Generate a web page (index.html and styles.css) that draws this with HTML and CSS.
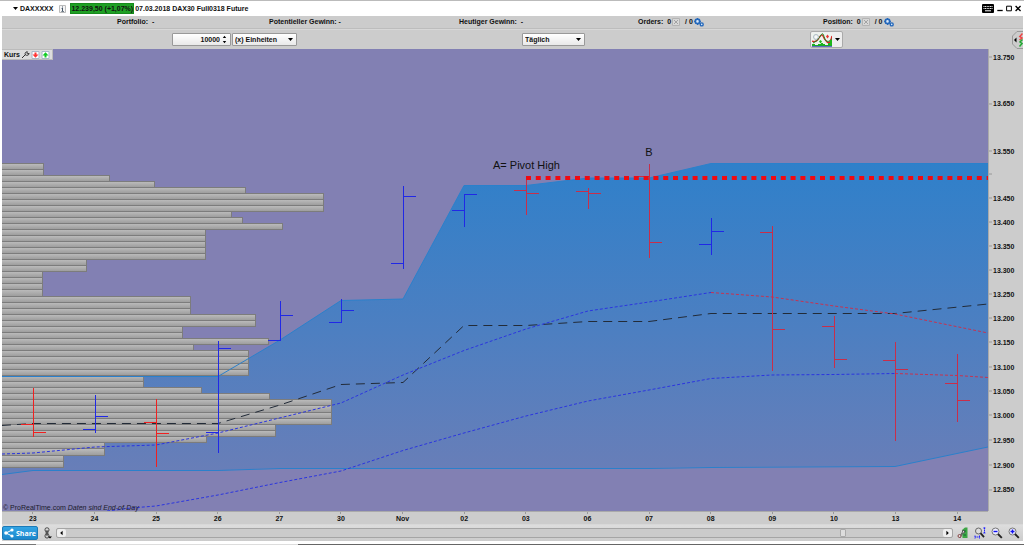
FILE: index.html
```html
<!DOCTYPE html>
<html lang="de">
<head>
<meta charset="utf-8">
<title>DAX30 Full0318 Future</title>
<link rel="stylesheet" href="styles.css">
</head>
<body>
<svg class="defs" aria-hidden="true">
  <symbol id="cancel" viewBox="0 0 9 8"><path d="M.5.5h7v7h-7z" fill="#d8d8d8" stroke="#b4b4b4"/><path d="M2 2l4 4M6 2L2 6" stroke="#a4a4a4"/></symbol>
  <symbol id="gears" viewBox="0 0 10 9"><circle cx="3.500" cy="3.400" r="2.200" fill="#d9e8f8" stroke="#2468bb" stroke-width="1.800"/><path d="M3.500 0v1M3.500 6v1M0 3.400h1M6 3.400h1M1 1l.8.8M6 1l-.8.8M1 6l.8-.8" stroke="#2468bb"/><circle cx="7.700" cy="6.400" r="1.500" fill="#d9e8f8" stroke="#2468bb" stroke-width="1.400"/></symbol>
  <symbol id="down" viewBox="0 0 5 3"><path d="M0 0h5L2.500 3z"/></symbol>
</svg>
<div class="app">
  <header class="title">
    <button class="symbol"><svg class="caret"><use href="#down"/></svg>DAXXXXX</button>
    <button class="info" aria-label="Info"><svg viewBox="0 0 7 8"><path d="M.5.5h6v7h-6z" fill="#f5f5f5" stroke="#bbb"/><path d="M3 1.500h1v1H3zM2.500 3H4v3h1v.7H2.300V6H3V3.700h-.5z" fill="#456"/></svg></button>
    <span class="quote">12.239,50 (+1,07%)</span>
    <h1 class="name">07.03.2018 DAX30 Full0318 Future</h1>
    <div class="window">
      <button aria-label="Tastatur"><svg class="keyboard" viewBox="0 0 12 9"><rect width="12" height="9" rx="1"/><path d="M1.500 2.500h9M1.500 4.500h9" stroke="#fff" stroke-dasharray="1 .6"/><path d="M3 6.800h6" stroke="#fff"/></svg></button>
      <button aria-label="Minimieren"><svg class="win" viewBox="0 0 6 7"><path d="M.3 5.500h5.400" stroke="#000" stroke-width="1.300"/></svg></button>
      <button aria-label="Maximieren"><svg class="win" viewBox="0 0 6 7"><path d="M.6 1.200h4.800v4.600H.6z" fill="none" stroke="#000"/></svg></button>
      <button aria-label="Schließen"><svg class="win" viewBox="0 0 6 7"><path d="M.6 1l5 5M5.600 1l-5 5" stroke="#000" stroke-width="1.400"/></svg></button>
    </div>
  </header>
  <div class="status">
    <span>Portfolio: &nbsp;-</span>
    <span>Potentieller Gewinn: -</span>
    <span>Heutiger Gewinn: &nbsp;-</span>
    <span class="count">Orders: &nbsp;0 <svg class="cancel"><use href="#cancel"/></svg> / 0<svg class="gears"><use href="#gears"/></svg></span>
    <span class="count">Position: &nbsp;0 <svg class="cancel"><use href="#cancel"/></svg> / 0<svg class="gears"><use href="#gears"/></svg></span>
  </div>
  <div class="toolbar">
    <div class="fields">
      <label class="field quantity"><input type="text" inputmode="numeric" value="10000" aria-label="Menge"><svg viewBox="0 0 5 9"><path d="M.8 3h3.400L2.500.8zM.8 6h3.400L2.500 8.200z"/></svg></label>
      <label class="field unit"><select aria-label="Einheit"><option>(x) Einheiten</option></select><svg class="arrow"><use href="#down"/></svg></label>
    </div>
    <div><label class="field period"><select aria-label="Zeitraum"><option>Täglich</option></select><svg class="arrow"><use href="#down"/></svg></label></div>
    <div><button class="indicator" aria-label="Indikatoren">
      <svg class="picture" viewBox="0 0 20 14"><path d="M0 0h20v14H0z" fill="#eef3ee"/><path d="M0 8Q4 10 7 5t4-2 4 6 5-6" fill="none" stroke="#d22" stroke-width="1.300"/><path d="M1 10Q5 9 8 3.500t4 0 4 5 4-3" fill="none" stroke="#282"/><path d="M0 13v-2h3v1h3v-1h3v-1h2v1h2v1h3v-2h2V7h2v6z" fill="#1bb51b"/><path d="M0 13.400h20" stroke="#2038b0" stroke-width=".8"/><path d="M4 1v6M1 4h6" stroke="#8fa0ad" stroke-width="2.600"/><path d="M4 1.500v5M1.500 4h5" stroke="#fff" stroke-width="1.500"/><path d="M15.500 1.500l1.500 2-1.500 2-1.500-2z" fill="#e33"/><path d="M8.500 7l1.500 1.500-1.500 2L7 8.500z" fill="#2b2"/></svg>
      <svg class="arrow"><use href="#down"/></svg></button></div>
    <button class="tab" aria-label="Seitenleiste"><svg viewBox="0 0 11 18"><path d="M11 .5H5L.5 5v8L5 17.500h6" fill="#ccc" stroke="#999"/><path d="M4.500 6.500v5L2 9z"/><path d="M10.500 2.500L7.800 5.500 10 7 7.500 9" fill="none" stroke="#e44" stroke-width="1.500"/><path d="M10.500 8.500L8 11l2 1.500-2.500 3" fill="none" stroke="#2a3" stroke-width="1.500"/></svg></button>
  </div>
  <main class="chart">
    <div class="plot">
      <svg class="canvas" role="img" aria-label="Kursverlauf DAX30">
        <defs>
          <linearGradient id="cloud" gradientUnits="userSpaceOnUse" x1="0" y1="163" x2="0" y2="470"><stop offset="0" stop-color="#2f80ca"/><stop offset=".55" stop-color="#4d7fc1"/><stop offset="1" stop-color="#687eb8"/></linearGradient>
          <linearGradient id="bar" x1="0" y1="0" x2="0" y2="1"><stop offset="0" stop-color="#bdbdbd"/><stop offset="1" stop-color="#9b9b9b"/></linearGradient>
        </defs>
        <svg viewBox="2 49 986 462" preserveAspectRatio="none" width="100%" height="100%">
          <path fill="url(#cloud)" d="M2 376.500H218L280 340 341 300.500 403 299 464 185.500H526L588 178H649L711 163.500H988V447L895 466.500 711 467 649 468H280L218 470.500H33L2 474.500z"/>
          <g id="volume"></g>
          <path class="band" d="M2 376.500H218L280 340 341 300.500 403 299 464 185.500H526L588 178H649L711 163.500H988"/>
          <path class="band" d="M2 474.500L33 470.500H218L280 468.500H649L711 467.500 895 466.500 988 447"/>
          <path class="middle" d="M2 425.500L33 423.500H218L280 405 341 384.500 403 382.500 464 325.500H526L588 321.500H649L711 313.500H895L988 304"/>
          <path class="average" d="M2 454L33 453 95 447 156 445 218 433 341 403 403 375 464 350.500 526 329 588 311 649 302 711 292.500"/>
          <path class="average falling" d="M711 292.500L772 297 834 306 895 314 988 333"/>
          <path class="average" d="M107 511L131 508 156 506 218 495 280 482.500 341 471 403 450.500 464 433 526 416 588 401 649 390 711 378.500 772 375 834 374.500 895 373.500"/>
          <path class="average falling" d="M895 373.500L957 375.500 988 377.500"/>
          <g id="prices"></g>
          <path class="pivot" d="M526 178H988"/>
        </svg>
        <text class="note" x="49.800%" y="26%">A= Pivot High</text>
        <text class="note mid" x="65.600%" y="23.200%">B</text>
      </svg>
      <div class="legend"><span>Kurs</span>
        <button aria-label="Einstellungen"><svg viewBox="0 0 9 8"><path d="M1 7l3.500-3.500M4.300 3.800C3.500 2 5 .5 6.500.8L5.700 2l1 1 1.400-.7C8.300 4 6 5 4.300 3.800z" fill="#eee" stroke="#333" stroke-width="1"/></svg></button>
        <button aria-label="Verkaufen"><svg viewBox="0 0 8 8"><path d="M.5.5h7v7h-7z" fill="#fff" stroke="#a9b8c8"/><path d="M3 1.500h2v2h2L4 6.800 1 3.500h2z" fill="#f33"/></svg></button>
        <button aria-label="Kaufen"><svg viewBox="0 0 8 8"><path d="M.5.5h7v7h-7z" fill="#fff" stroke="#a9b8c8"/><path d="M3 6.500h2v-2h2L4 1.200 1 4.500h2z" fill="#1c2"/></svg></button>
      </div>
      <p class="source">© ProRealTime.com <em>Daten sind End-of-Day</em></p>
    </div>
    <svg class="levels" id="levels"></svg>
    <ol class="days"><li>23</li><li>24</li><li>25</li><li>26</li><li>27</li><li>30</li><li>Nov</li><li>02</li><li>03</li><li>06</li><li>07</li><li>08</li><li>09</li><li>10</li><li>13</li><li>14</li></ol>
  </main>
  <footer class="bottom">
    <button class="share"><svg viewBox="0 0 10 10"><path d="M8 2L2 5l6 3" fill="none" stroke="#fff"/><g fill="#fff"><circle cx="8" cy="2" r="1.600"/><circle cx="2" cy="5" r="1.800"/><circle cx="8" cy="8" r="1.600"/></g></svg>Share</button>
    <button class="link" aria-label="Verknüpfen"><svg viewBox="0 0 9 12"><g fill="none" stroke="#444"><rect x="2" y=".8" width="4" height="4" rx="1.800"/><rect x="2" y="7" width="4" height="4" rx="1.800"/><path d="M4 3v6M2.500 5.200h3M2.500 6.800h3"/></g><path d="M5 9.500h4l-2 2z"/></svg></button>
    <div class="scroll">
      <button aria-label="Zurück"><svg viewBox="0 0 9 9"><path d="M5.800 2v5L3 4.500z"/></svg></button>
      <input type="range" min="0" max="1000" value="889" aria-label="Zeitachse">
      <button aria-label="Vor"><svg viewBox="0 0 9 9"><path d="M3.200 2v5L6 4.500z"/></svg></button>
    </div>
    <div class="tools">
      <button aria-label="Anpassen"><svg viewBox="0 0 12 12"><path d="M5 3l3-2.500h2.500V11H5.500z" fill="#3da545"/><path d="M6.500 4h2.500M6.500 8h2.500" stroke="#163"/><path d="M2 10l3-4 1-3 2 2-3 2-2 4z" fill="#ddd" stroke="#555"/><circle cx="2.500" cy="9" r="1.500" fill="#ddd" stroke="#844"/></svg></button>
      <button aria-label="Bereich"><svg viewBox="0 0 12 12"><circle cx="4.500" cy="4" r="3" fill="#ddd" stroke="#666"/><path d="M6.500 6.200l3.500 4" stroke="#222" stroke-width="1.800"/><path d="M10.500.5v6M9.300 1h2.400M9.300 6h2.400M1 10h5M1 8.500v3M5.500 8.500v3" stroke="#22f" stroke-dasharray="1.500 .5"/></svg></button>
      <button aria-label="Verkleinern"><svg viewBox="0 0 12 12"><circle cx="4.500" cy="4.500" r="3.500" fill="#eef" stroke="#777"/><path d="M2.500 4.500h4" stroke="#11e" stroke-width="1.400"/><path d="M7 7l3.800 3.800" stroke="#222" stroke-width="1.900"/></svg></button>
      <button aria-label="Vergrößern"><svg viewBox="0 0 12 12"><circle cx="4.500" cy="4.500" r="3.500" fill="#eef" stroke="#777"/><path d="M2.500 4.500h4M4.500 2.500v4" stroke="#11e" stroke-width="1.400"/><path d="M7 7l3.800 3.800" stroke="#222" stroke-width="1.900"/></svg></button>
    </div>
  </footer>
</div>
<div class="edge"></div>
<script src="chart.js"></script>
</body>
</html>
```
FILE: styles.css
```css
* { box-sizing: border-box; }
body {
  margin: 0;
  height: 100vh;
  display: flex;
  flex-direction: column;
  background: #fff;
  border-top: 1px solid #bbb;
  color: #111;
  font: bold 7px/10px "Liberation Sans", Arial, sans-serif;
}
button {
  display: flex;
  align-items: center;
  padding: 0;
  border: 0;
  background: none;
  color: inherit;
  font: inherit;
}
svg { display: block; flex: none; }
.defs { position: absolute; width: 0; height: 0; }
.app {
  flex: 1;
  min-height: 0;
  display: flex;
  flex-direction: column;
  margin: 0 1px 0 2px;
  background: #ccc;
}

.title {
  display: flex;
  align-items: center;
  height: 15px;
  padding: 0 2px 0 11px;
  background: #fff;
}
.symbol { gap: 2px; }
.caret { width: 5px; height: 3px; }
.info { margin: 0 4px 0 6px; }
.info svg { width: 7px; height: 8px; }
.quote { background: #1fa024; border: 1px solid #178a1c; line-height: 9px; }
.name { margin: 0 0 0 1px; font-size: 7px; }
.window { display: flex; align-items: center; gap: 3px; margin-left: auto; }
.keyboard { width: 12px; height: 9px; }
.win { width: 6px; height: 7px; }

.status {
  display: grid;
  grid-template-columns: 152fr 190fr 179fr 185fr 200fr;
  align-items: center;
  height: 13px;
  padding-left: 115px;
  border-bottom: 1px solid #bdbdbd;
  white-space: nowrap;
}
.count { display: flex; align-items: center; gap: 1px; }
.cancel { width: 9px; height: 8px; margin-right: 3px; }
.gears { width: 10px; height: 9px; }

.toolbar {
  display: grid;
  grid-template-columns: 350fr 288fr 202fr 11px;
  align-items: center;
  height: 20px;
  padding-left: 170px;
  border-top: 1px solid #d8d8d8;
}
.fields { display: flex; gap: 1px; }
.field {
  display: flex;
  align-items: center;
  height: 13px;
  padding-right: 3px;
  background: linear-gradient(#fff, #e9e9e9);
  border: 1px solid #999;
  border-radius: 1px;
}
.field input, .field select {
  flex: 1;
  min-width: 0;
  height: 11px;
  padding: 0 2px;
  border: 0;
  background: none;
  color: inherit;
  font: inherit;
  appearance: none;
}
.quantity { width: 59px; }
.quantity input { text-align: right; }
.quantity svg { width: 5px; height: 9px; }
.unit { width: 65px; }
.period { width: 63px; }
.arrow { width: 5px; height: 3px; }
.indicator {
  gap: 3px;
  height: 17px;
  padding: 0 2px 0 1px;
  background: #eee;
  border: 1px solid #aaa;
  border-radius: 2px;
}
.picture { width: 20px; height: 14px; }
.tab svg { width: 11px; height: 18px; }

.chart {
  flex: 1;
  min-height: 0;
  display: grid;
  grid-template: minmax(0, 1fr) 13px / minmax(0, 1fr) 35px;
}
.plot { position: relative; background: #8280b3; }
.canvas { position: absolute; width: 100%; height: 100%; }
.band { fill: none; stroke: #2b80cb; }
.middle { fill: none; stroke: #222b38; stroke-dasharray: 9 6; }
.average { fill: none; stroke: #2b35df; stroke-dasharray: 3 2; }
.falling { stroke: #c73250; }
.pivot { stroke: #f00a12; stroke-width: 4; stroke-dasharray: 5 4.8; }
.volume-bar { fill: url(#bar); stroke: #7c7c7c; }
.price { fill: none; stroke: #2028e6; }
.price.loss { stroke: #c82e4a; }
.price.bright { stroke: #f02020; }
.note { font: 11px "Liberation Sans", Arial, sans-serif; fill: #111; }
.mid { text-anchor: middle; }
.legend {
  position: absolute;
  top: 0;
  left: 0;
  display: flex;
  align-items: center;
  gap: 1px;
  height: 11px;
  padding: 0 2px;
  background: #ddd;
  border: 1px solid #bbb;
  border-left: 0;
}
.legend svg { width: 9px; height: 8px; }
.source {
  position: absolute;
  bottom: -2px;
  left: 1px;
  margin: 0;
  font-weight: normal;
  color: #1b1b2c;
}
.levels { width: 35px; height: 100%; border-left: 1px solid #aaa; font-size: 7px; fill: #111; }
.levels line { stroke: #999; }
.days {
  display: grid;
  grid-template-columns: repeat(16, 1fr);
  margin: 0;
  padding: 0;
  list-style: none;
  border-top: 1px solid #aaa;
  text-align: center;
  line-height: 14px;
}
.days li {
  background: linear-gradient(#999, #999) center top / 1px 2px no-repeat;
}

.bottom {
  display: flex;
  align-items: center;
  height: 17px;
  padding-right: 3px;
  background: linear-gradient(#ddd, #ccc);
  border-top: 1px solid #d8d8d8;
}
.share {
  gap: 2px;
  height: 14px;
  padding: 0 1px;
  background: linear-gradient(#33a4e4, #1c87cc);
  border: 1px solid #1b7ab8;
  border-radius: 2px;
  color: #fff;
  font: bold 7px "Open Sans", sans-serif;
}
.share svg { width: 10px; height: 10px; }
.link { margin: 0 4px 0 5px; }
.link svg { width: 9px; height: 12px; }
.scroll {
  flex: 1;
  display: flex;
  height: 10px;
  background: #cbcbcb;
  border: 1px solid #a5a5a5;
  border-radius: 2px;
}
.scroll button { background: #eee; border-radius: 2px; }
.scroll button svg { width: 9px; height: 8px; }
.scroll input { flex: 1; min-width: 0; height: 8px; margin: 0; appearance: none; background: none; }
.scroll input::-webkit-slider-thumb {
  appearance: none;
  width: 6px;
  height: 8px;
  background: #ddd;
  border: 1px solid #aaa;
  border-radius: 1px;
}
.tools { display: flex; gap: 5px; margin-left: 4px; }
.tools svg { width: 12px; height: 12px; }
.edge {
  height: 4px;
  border-top: 3px solid #fff;
  background: linear-gradient(90deg, #777 0 36px, #ddd 36px 298px, #666 298px);
}
```
FILE: chart.js
```js
const NS = "http://www.w3.org/2000/svg";

function add(parent, tag, attributes, text) {
  const node = document.createElementNS(NS, tag);
  for (const key in attributes) node.setAttribute(key, attributes[key]);
  if (text) node.textContent = text;
  document.getElementById(parent).append(node);
}

// Volume profile: right edge of the bars and how many share it.
const profile = [
  [43, 2], [109, 1], [154, 1], [245, 1], [323, 3], [231, 1], [242, 1], [282, 1],
  [205, 5], [86, 2], [42, 4], [190, 3], [255, 2], [182, 2], [268, 1], [193, 1],
  [248, 4], [143, 2], [201, 1], [269, 1], [331, 4], [275, 2], [206, 1], [104, 2], [63, 2]
];
const edgeAt = i => Math.round(163 + 5.98 * i + 0.002 * i * i) + 0.5;
let index = 0;
for (const [right, count] of profile) {
  for (let n = 0; n < count; n++, index++) {
    const y = edgeAt(index);
    add("volume", "rect", { class: "volume-bar", x: 0.5, y, width: right, height: edgeAt(index + 1) - y });
  }
}

// Daily prices: x, high, low, open, close, style.
const prices = [
  [33, 388, 437, 424, 432, "loss bright"], [95, 395, 433, 429, 416, ""],
  [156, 399, 467, 422, 433, "loss bright"], [218, 341, 453, 432, 348, ""],
  [280, 301, 341, 340, 315, ""], [341, 299, 323, 322, 310, ""],
  [403, 186, 269, 263, 196, ""], [464, 194, 227, 210, 194, ""],
  [526, 178, 215, 190, 193, "loss"], [588, 188, 209, 191, 193, "loss"],
  [649, 164, 258, 176, 242, "loss"], [711, 218, 255, 244, 231, ""],
  [772, 226, 371, 232, 329, "loss"], [834, 316, 368, 326, 359, "loss"],
  [895, 342, 441, 360, 369, "loss"], [957, 354, 422, 383, 400, "loss"]
];
for (const [x, high, low, open, close, style] of prices) {
  add("prices", "path", {
    class: "price " + style,
    d: `M${x + 0.5} ${high}V${low}M${x - 12} ${open + 0.5}h12M${x + 1} ${close + 0.5}h12`
  });
}

// Price scale on the right.
const levels = [
  ["13.750", 57], ["13.650", 104], ["13.550", 151], ["", 174], ["13.450", 198], ["13.400", 222],
  ["13.350", 246], ["13.300", 270], ["13.250", 294], ["13.200", 318], ["13.150", 342],
  ["13.100", 367], ["13.050", 391], ["13.000", 415], ["12.950", 440], ["12.900", 465], ["12.850", 490]
];
for (const [label, y] of levels) {
  const at = ((y - 49) / 462 * 100).toFixed(2) + "%";
  add("levels", "line", { x1: 0, x2: 3, y1: at, y2: at });
  if (label) add("levels", "text", { x: 4, y: at, dy: "0.36em" }, label);
}
```
